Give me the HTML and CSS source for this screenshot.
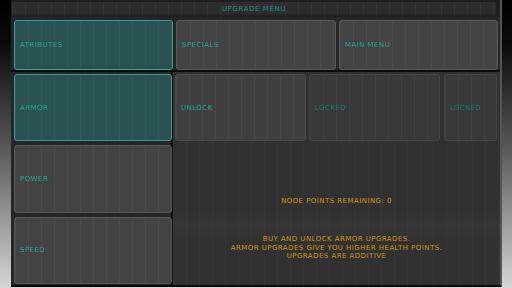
FILE: index.html
```
<!DOCTYPE HTML>
<html>

<head>
    <meta charset="utf-8">
    <link rel="stylesheet" href="styles.css">
</head>

<body>
    <div class="screen">
        <div class="header">UPGRADE MENU</div>

        <div class="tabs">
            <div class="btn active">ATRIBUTES</div>
            <div class="btn">SPECIALS</div>
            <div class="btn">MAIN MENU</div>
        </div>

        <div class="main">
            <div class="stats">
                <div class="btn active">ARMOR</div>
                <div class="btn">POWER</div>
                <div class="btn">SPEED</div>
            </div>

            <div class="content">
                <div class="nodes">
                    <div class="btn node">UNLOCK</div>
                    <div class="btn node locked">LOCKED</div>
                    <div class="btn node locked small">LOCKED</div>
                </div>

                <div class="points">NODE POINTS REMAINING: 0</div>

                <div class="info">
                    BUY AND UNLOCK ARMOR UPGRADES.<br>
                    ARMOR UPGRADES GIVE YOU HIGHER HEALTH POINTS.<br>
                    UPGRADES ARE ADDITIVE
                </div>
            </div>
        </div>
    </div>
</body>

</html>
```

FILE: styles.css
```
html,
body {
    margin: 0;
    height: 100%;
}

body {
    width: 512px;
    height: 288px;
    overflow: hidden;
    background: linear-gradient(#000, #0a0a0a 15%, #555 50%, #d6d6d6);
    font-family: "DejaVu Sans", "Liberation Sans", sans-serif;
    font-size: 7px;
    line-height: 8px;
    letter-spacing: 0.45px;
}

.screen {
    margin-left: 11px;
    width: 489px;
    height: 285px;
    background: #1e1e1e;
    border-right: 2px solid #555;
    border-bottom: 2px solid #0a0a0a;
    display: flex;
    flex-direction: column;
}

.header {
    height: 15px;
    margin: 2px 4px 0 1px;
    border-radius: 2px;
    background-color: #2d2d2d;
    background-image:
        linear-gradient(transparent 70%, rgba(0, 0, 0, 0.35)),
        repeating-linear-gradient(90deg, rgba(255, 255, 255, 0.04) 0 1px, transparent 1px 13px);
    color: #1e8f90;
    text-align: center;
    line-height: 14px;
    letter-spacing: 0.6px;
}

.tabs {
    display: grid;
    grid-template-columns: 159px 160px 159px;
    gap: 3px;
    height: 50px;
    padding: 3px 0 0 3px;
    border-bottom: 2px solid #0b0b0b;
    background: #262626;
}

.btn {
    display: flex;
    align-items: center;
    padding-left: 5px;
    box-sizing: border-box;
    border: 1px solid #585858;
    border-radius: 3px;
    background-color: #434343;
    background-image: repeating-linear-gradient(90deg, rgba(255, 255, 255, 0.035) 0 1px, transparent 1px 13px);
    color: #21a693;
}

.btn.active {
    border-color: #3e9b93;
    background-color: #2a5250;
}

.main {
    flex: 1;
    display: flex;
    background: #151515;
}

.stats {
    width: 162px;
    padding: 2px 0 1px 3px;
    box-sizing: border-box;
    display: flex;
    flex-direction: column;
    gap: 4px;
    background: #262626;
    border-right: 2px solid #0e0e0e;
}

.stats .btn {
    flex: 1;
    width: 158px;
}

.content {
    flex: 1;
    display: flex;
    flex-direction: column;
    background-color: #313131;
    background-image:
        linear-gradient(transparent 65%, rgba(255, 255, 255, 0.025) 72%, transparent 80%),
        repeating-linear-gradient(90deg, rgba(255, 255, 255, 0.025) 0 1px, transparent 1px 13px);
}

.nodes {
    display: flex;
    gap: 3px;
    padding: 2px 0 0 2px;
    height: 69px;
    box-sizing: border-box;
}

.node {
    width: 131px;
    border-color: #4a4a4a;
    background-color: #404040;
}

.node.locked {
    background-color: #393939;
    border-color: #444;
    color: #1d7b70;
}

.node.small {
    width: 53px;
    margin-left: 1px;
}

.points {
    margin-top: 56px;
    text-align: center;
    color: #d19612;
}

.info {
    margin-top: 30px;
    line-height: 8.5px;
    text-align: center;
    color: #d19612;
}
```
